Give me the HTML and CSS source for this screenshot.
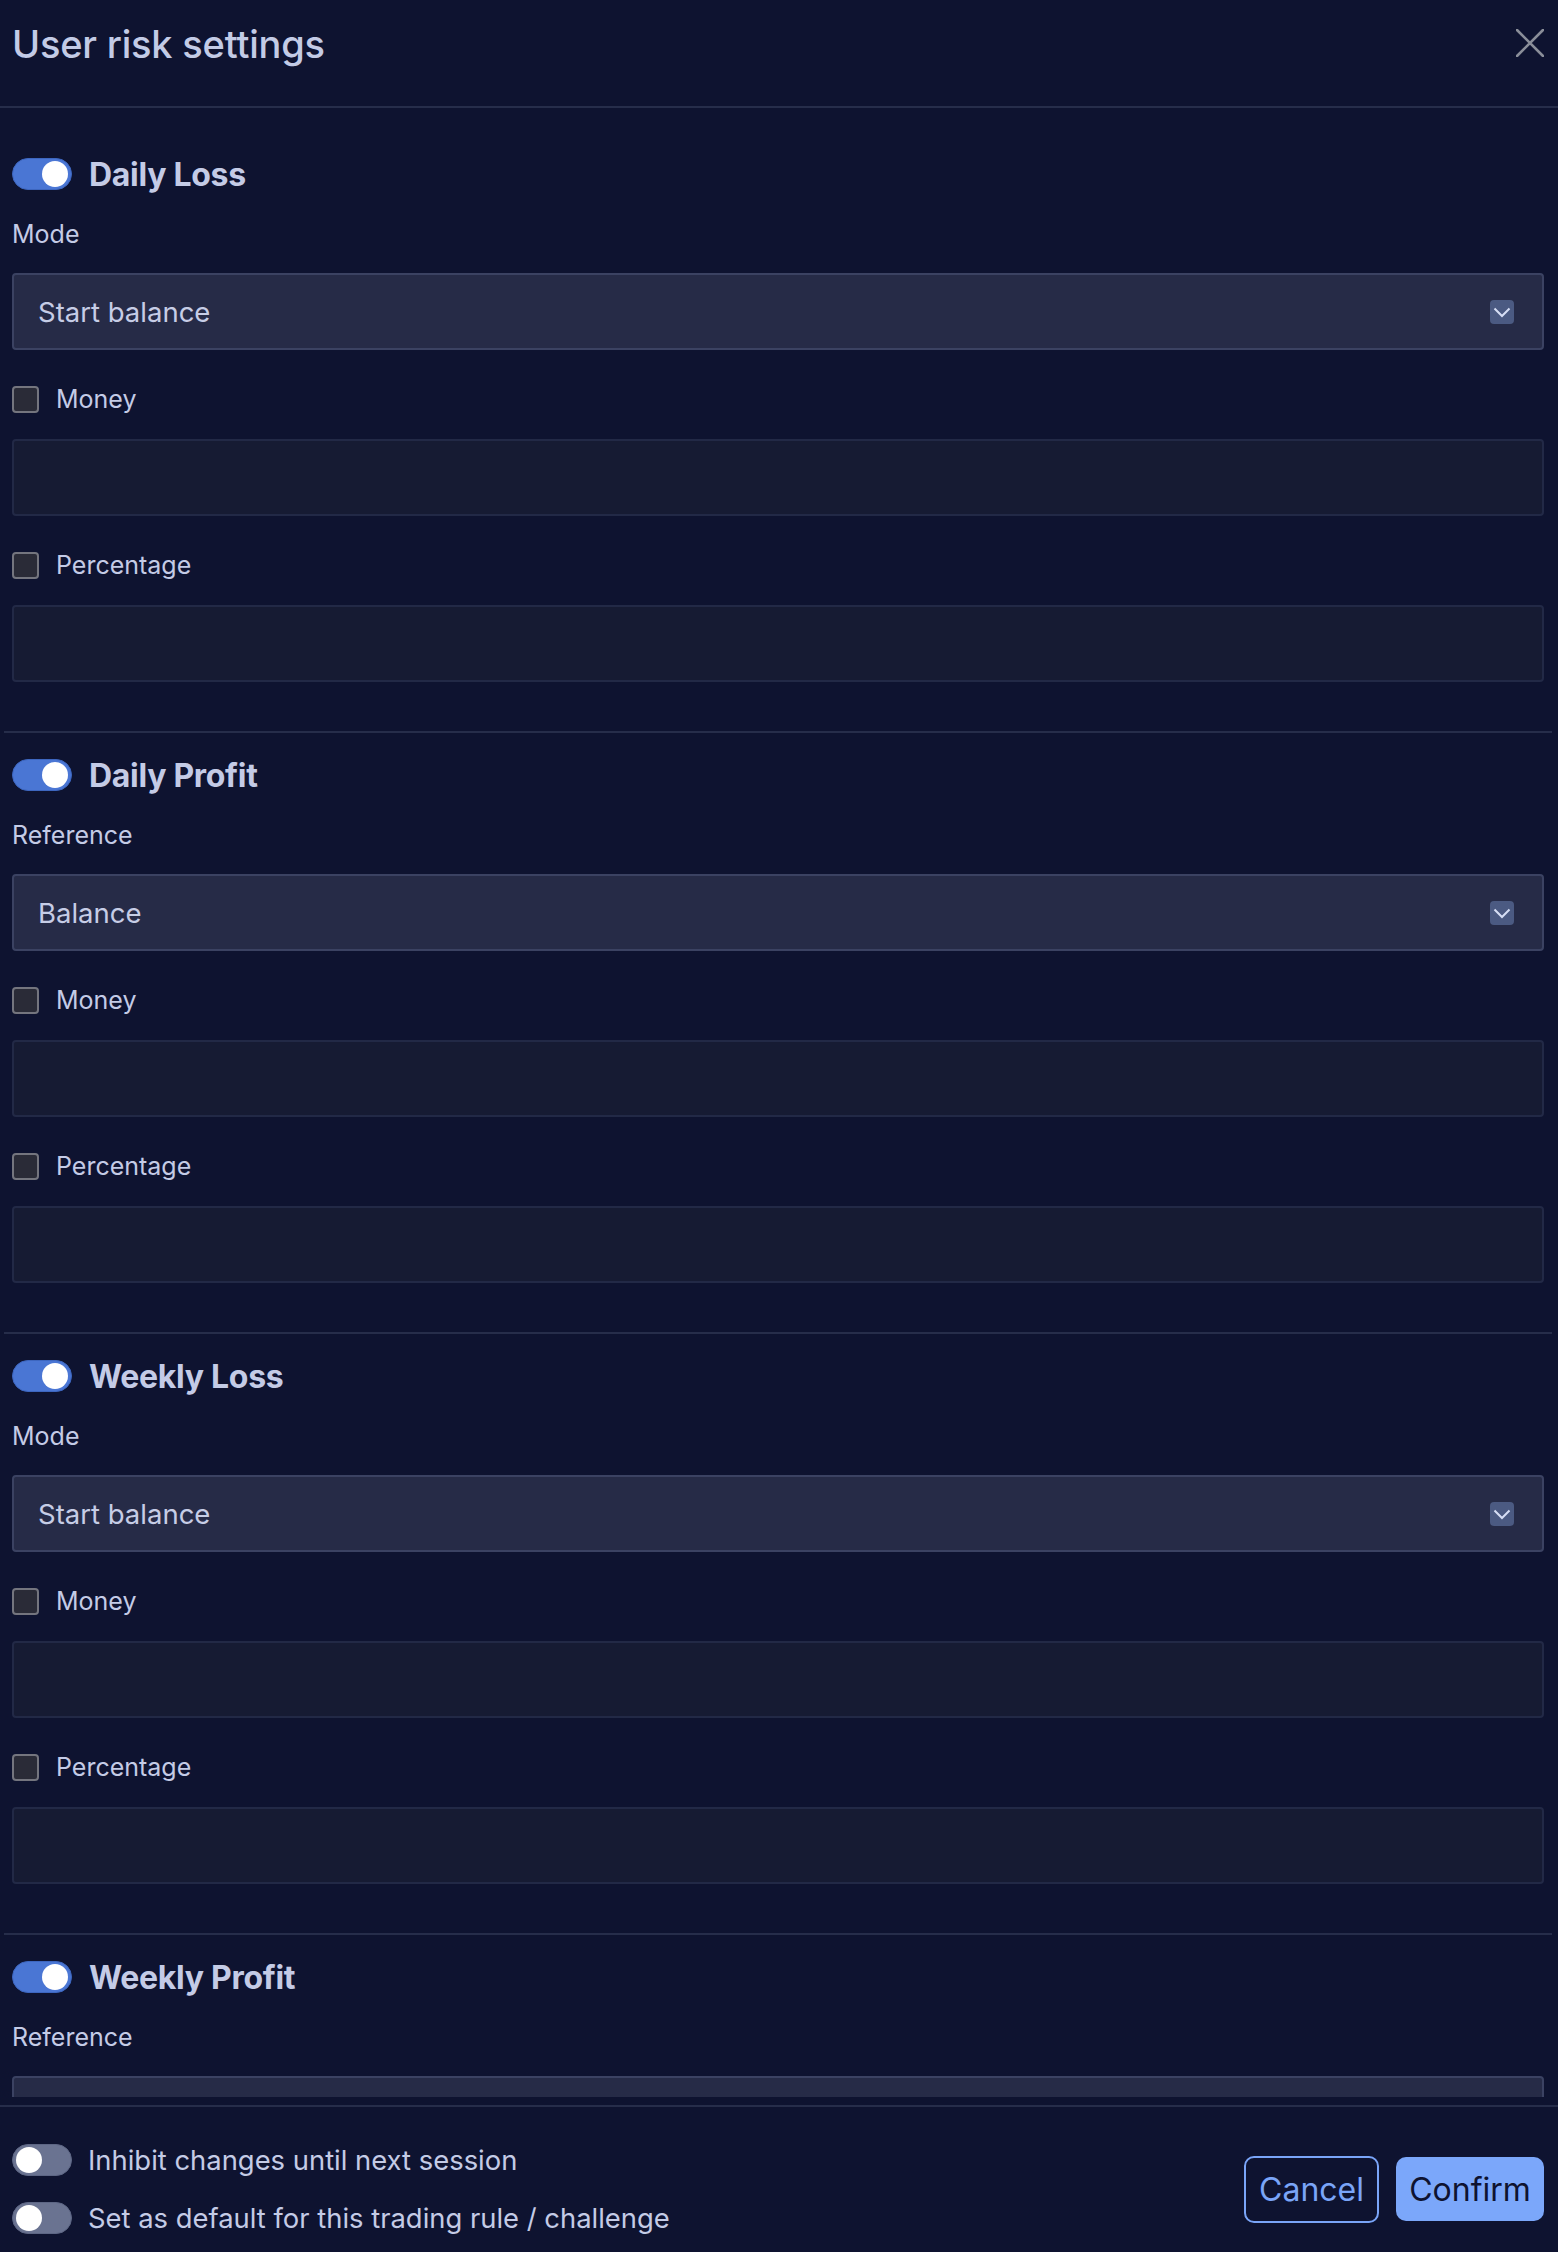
FILE: index.html
```html
<!DOCTYPE html>
<html lang="en">
<head>
    <meta charset="UTF-8">
    <meta name="viewport" content="width=device-width, initial-scale=1.0">
    <title>User risk settings</title>
    <link rel="stylesheet" href="styles.css">
</head>
<body>
    <div class="modal">
        <div class="modal-header">
            <h1>User risk settings</h1>
            <button class="close-btn" aria-label="Close">
                <svg width="28" height="28" viewBox="0 0 28 28">
                    <path d="M1 1 L27 27 M27 1 L1 27" stroke="#8a8e99" stroke-width="2.6" stroke-linecap="round" fill="none"/>
                </svg>
            </button>
        </div>

        <div class="modal-body">
            <div class="rule">
                <div class="rule-title">
                    <span class="toggle on"></span>
                    <h2>Daily Loss</h2>
                </div>
                <div class="field-label">Mode</div>
                <div class="select">
                    <span>Start balance</span>
                    <span class="select-arrow">
                        <svg width="24" height="24" viewBox="0 0 24 24"><path d="M4.5 8.5 L12 16 L19.5 8.5" stroke="#d6def5" stroke-width="2" fill="none"/></svg>
                    </span>
                </div>
                <label class="check"><span class="box"></span>Money</label>
                <input class="text-input" type="text">
                <label class="check"><span class="box"></span>Percentage</label>
                <input class="text-input" type="text">
            </div>

            <div class="rule">
                <div class="rule-title">
                    <span class="toggle on"></span>
                    <h2>Daily Profit</h2>
                </div>
                <div class="field-label">Reference</div>
                <div class="select">
                    <span>Balance</span>
                    <span class="select-arrow">
                        <svg width="24" height="24" viewBox="0 0 24 24"><path d="M4.5 8.5 L12 16 L19.5 8.5" stroke="#d6def5" stroke-width="2" fill="none"/></svg>
                    </span>
                </div>
                <label class="check"><span class="box"></span>Money</label>
                <input class="text-input" type="text">
                <label class="check"><span class="box"></span>Percentage</label>
                <input class="text-input" type="text">
            </div>

            <div class="rule">
                <div class="rule-title">
                    <span class="toggle on"></span>
                    <h2>Weekly Loss</h2>
                </div>
                <div class="field-label">Mode</div>
                <div class="select">
                    <span>Start balance</span>
                    <span class="select-arrow">
                        <svg width="24" height="24" viewBox="0 0 24 24"><path d="M4.5 8.5 L12 16 L19.5 8.5" stroke="#d6def5" stroke-width="2" fill="none"/></svg>
                    </span>
                </div>
                <label class="check"><span class="box"></span>Money</label>
                <input class="text-input" type="text">
                <label class="check"><span class="box"></span>Percentage</label>
                <input class="text-input" type="text">
            </div>

            <div class="rule">
                <div class="rule-title">
                    <span class="toggle on"></span>
                    <h2>Weekly Profit</h2>
                </div>
                <div class="field-label">Reference</div>
                <div class="select"></div>
            </div>
        </div>

        <div class="modal-footer">
            <div class="footer-options">
                <div class="option"><span class="toggle"></span>Inhibit changes until next session</div>
                <div class="option"><span class="toggle"></span>Set as default for this trading rule / challenge</div>
            </div>
            <div class="footer-actions">
                <button class="btn btn-outline">Cancel</button>
                <button class="btn btn-primary">Confirm</button>
            </div>
        </div>
    </div>
</body>
</html>
```

FILE: styles.css
```css
body {
    margin: 0;
    background-color: #0e1330;
    color: #c4cbe6;
    font-family: 'Inter', 'Noto Sans', sans-serif;
    overflow: hidden;
}

.modal {
    display: flex;
    flex-direction: column;
    height: 100vh;
}

.modal-header {
    box-sizing: border-box;
    height: 108px;
    flex-shrink: 0;
    display: flex;
    justify-content: space-between;
    align-items: flex-start;
    padding: 20px 14px 0 12px;
    border-bottom: 2px solid #262d4a;
}

.modal-header h1 {
    margin: 0;
    font-size: 38px;
    line-height: 48px;
    font-weight: 500;
    letter-spacing: -0.2px;
    color: #c3cbe6;
}

.close-btn {
    background: none;
    border: none;
    padding: 0;
    margin-top: 9px;
    width: 28px;
    height: 28px;
    cursor: pointer;
}

.modal-body {
    flex: 1;
    overflow: hidden;
    padding: 24px 6px 0 4px;
    margin-bottom: 8px;
}

.rule {
    padding: 26px 8px 49px;
    border-bottom: 2px solid #262d4a;
}

.rule-title {
    display: flex;
    align-items: center;
    gap: 17px;
    height: 32px;
}

.rule-title h2 {
    margin: 0;
    font-size: 32px;
    font-weight: 700;
    letter-spacing: -0.3px;
    color: #c4cbe6;
}

.toggle {
    box-sizing: border-box;
    position: relative;
    display: inline-block;
    width: 60px;
    height: 32px;
    border-radius: 16px;
    background-color: #6a7391;
    border: 1px solid #5d6684;
    flex-shrink: 0;
}

.toggle::after {
    content: "";
    position: absolute;
    top: 2px;
    left: 3px;
    width: 26px;
    height: 26px;
    border-radius: 50%;
    background: #fff;
}

.toggle.on {
    background-color: #4a76d4;
    border-color: #3d66bf;
}

.toggle.on::after {
    left: auto;
    right: 3px;
}

.field-label {
    margin-top: 26px;
    font-size: 25px;
    line-height: 36px;
}

.select {
    box-sizing: border-box;
    margin-top: 21px;
    height: 77px;
    display: flex;
    align-items: center;
    justify-content: space-between;
    padding: 0 28px 0 24px;
    background-color: #262b47;
    border: 2px solid #3b4262;
    border-radius: 4px;
    font-size: 27.5px;
    color: #c6cde6;
}

.select-arrow {
    display: flex;
    width: 24px;
    height: 24px;
    border-radius: 4px;
    background-color: #4b5a82;
}

.check {
    display: flex;
    align-items: center;
    gap: 17px;
    height: 28px;
    margin-top: 35px;
    font-size: 25px;
}

.box {
    box-sizing: border-box;
    width: 27px;
    height: 27px;
    border-radius: 4px;
    background-color: #2a2b37;
    border: 2px solid #74757e;
}

.text-input {
    display: block;
    box-sizing: border-box;
    width: 100%;
    height: 77px;
    margin-top: 26px;
    background-color: #161b33;
    border: 2px solid #222946;
    border-radius: 4px;
    font-size: 28px;
    color: #c6cde6;
}

.modal-footer {
    box-sizing: border-box;
    height: 147px;
    flex-shrink: 0;
    display: flex;
    justify-content: space-between;
    align-items: flex-start;
    padding: 37px 14px 0 12px;
    border-top: 2px solid #262d4a;
}

.footer-options {
    display: flex;
    flex-direction: column;
    gap: 26px;
}

.option {
    display: flex;
    align-items: center;
    gap: 16px;
    height: 32px;
    font-size: 27.4px;
}

.footer-actions {
    display: flex;
    align-items: center;
    gap: 17px;
    height: 90px;
}

.btn {
    font-family: inherit;
    font-size: 32px;
    border-radius: 10px;
    cursor: pointer;
}

.btn-outline {
    height: 67px;
    width: 135px;
    padding: 0;
    background: transparent;
    color: #7aa5f8;
    border: 2px solid #7aa5f8;
}

.btn-primary {
    height: 64px;
    width: 148px;
    padding: 0;
    background-color: #7ba7fa;
    color: #0e1330;
    border: none;
}
```
